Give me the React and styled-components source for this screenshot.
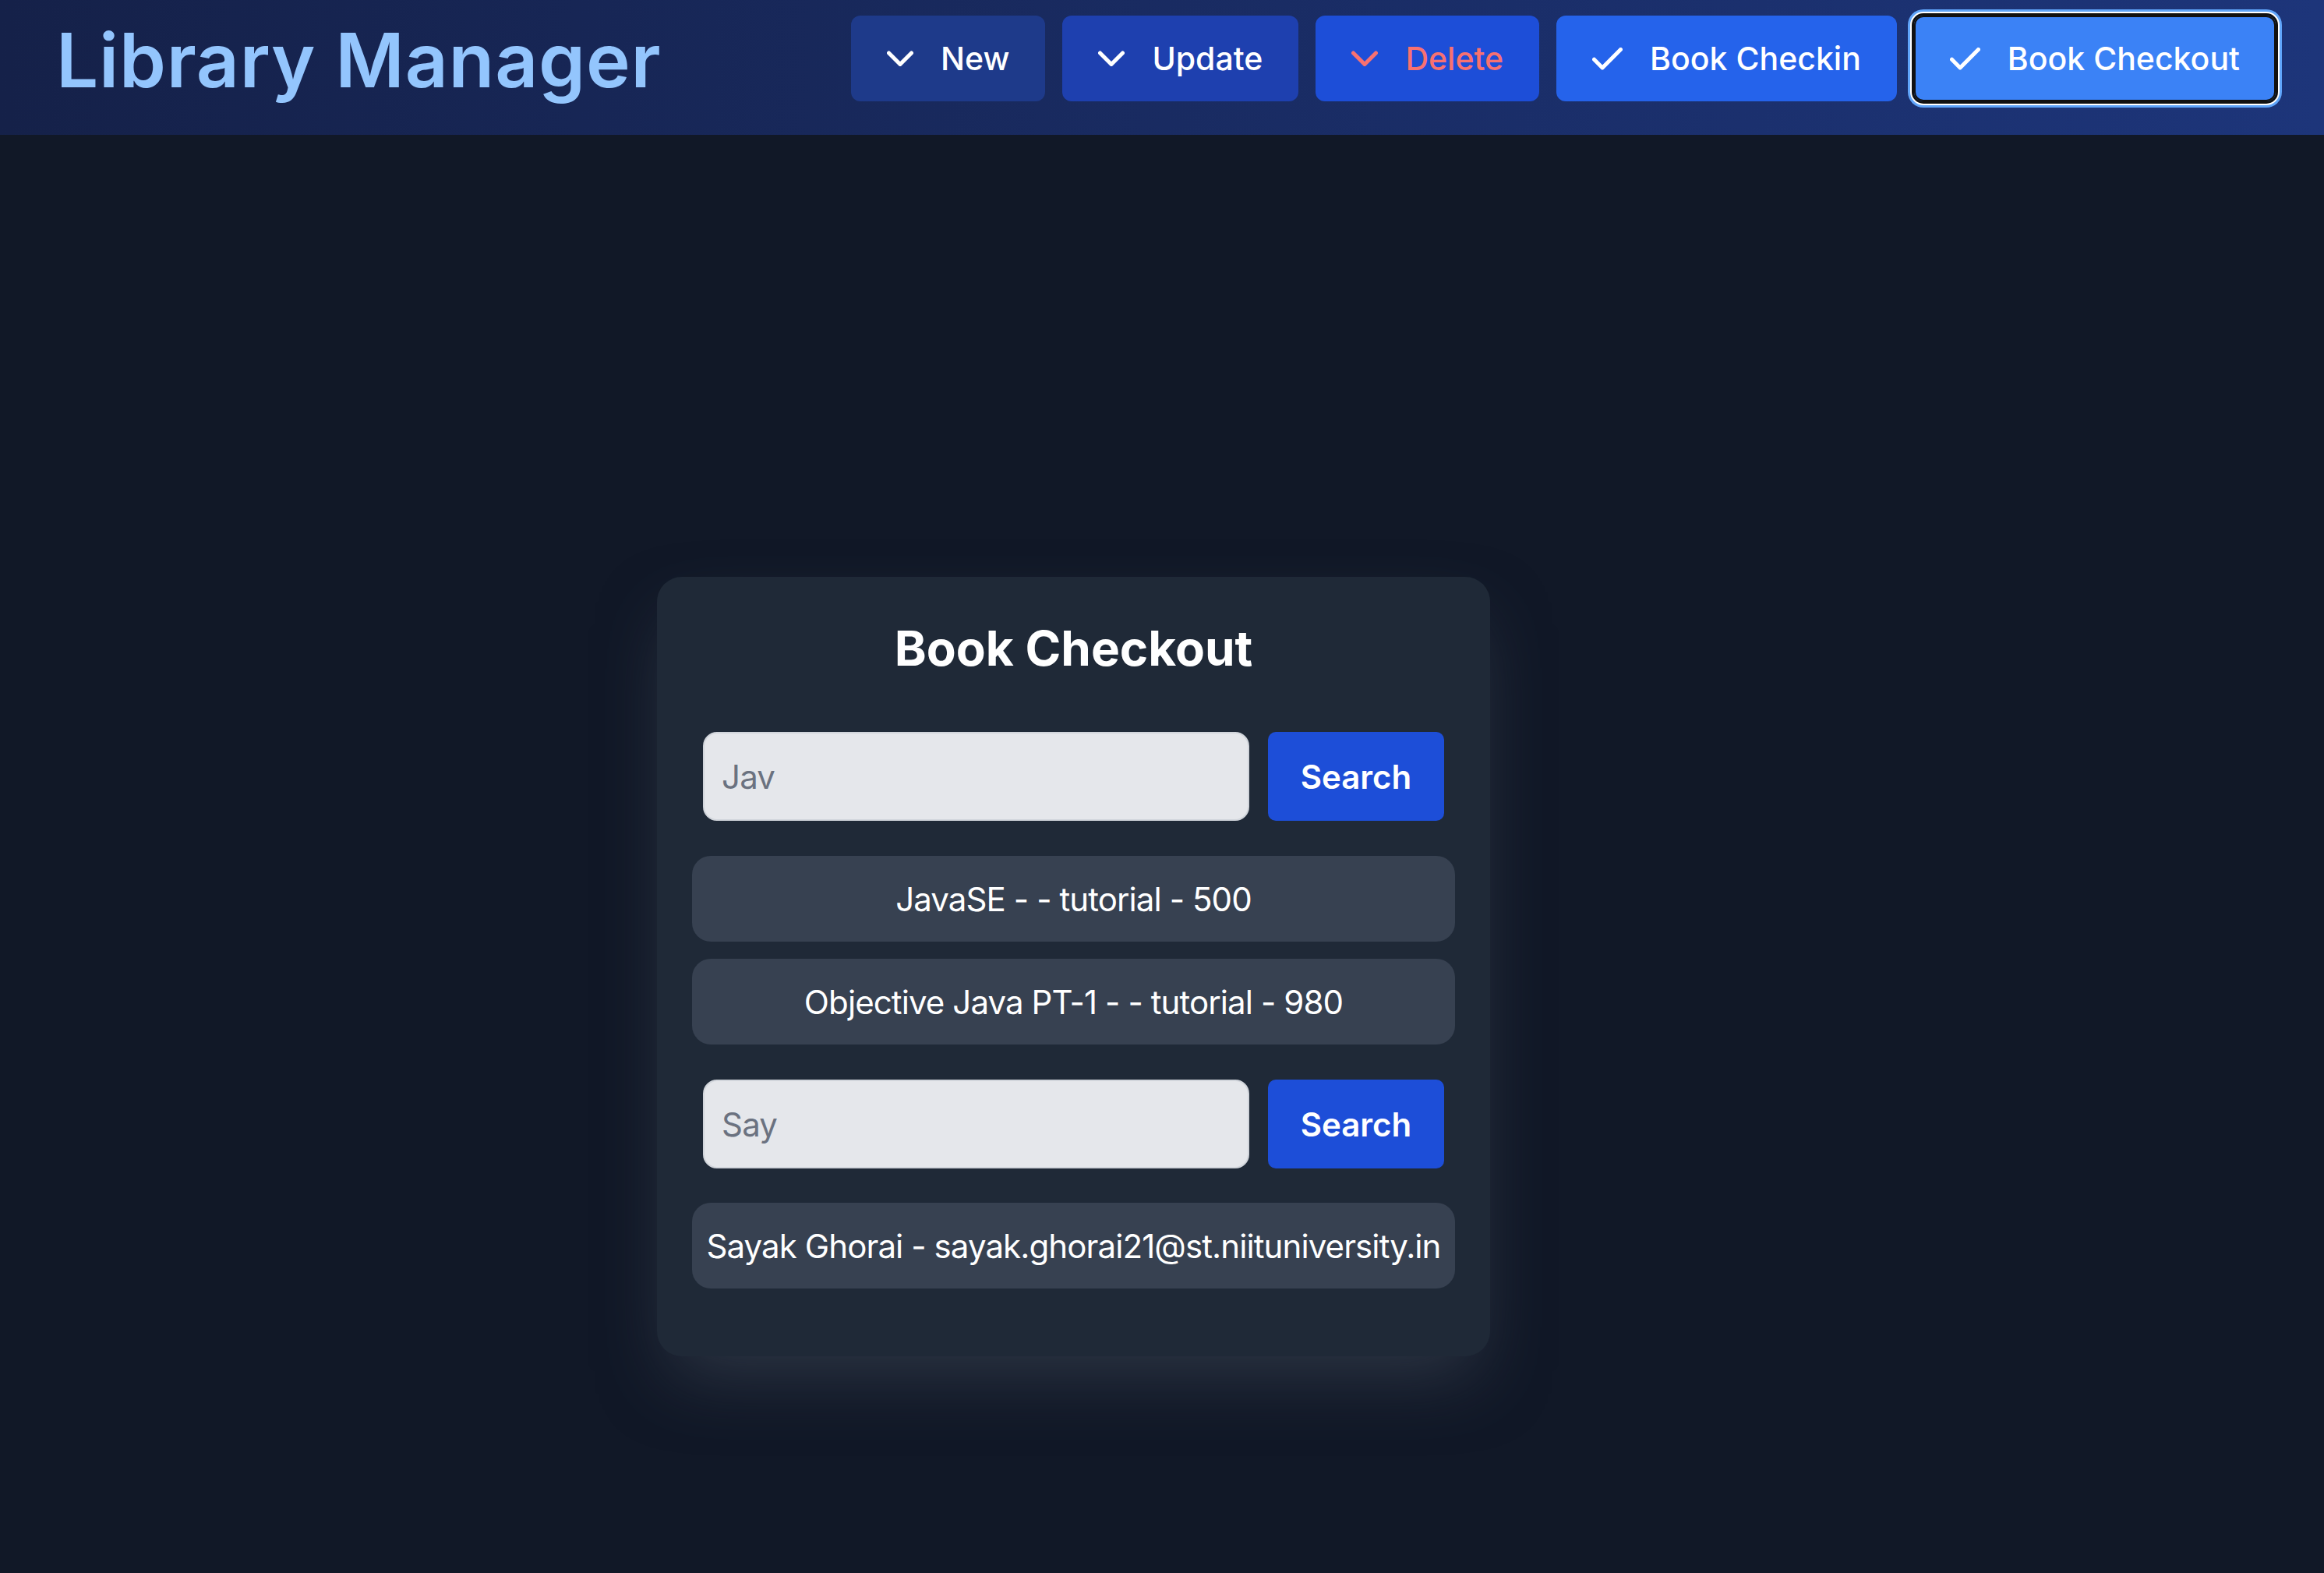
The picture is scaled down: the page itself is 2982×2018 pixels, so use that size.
import React from 'react';
import styled, { createGlobalStyle } from 'styled-components';

const GlobalStyle = createGlobalStyle`
  * { box-sizing: border-box; }
  body {
    margin: 0;
    background: #111827;
    font-family: Inter, "Noto Sans", sans-serif;
    min-height: 100vh;
  }
`;

const Page = styled.div`
  min-height: 100vh;
  background: #111827;
`;

const Header = styled.header`
  display: flex;
  align-items: center;
  justify-content: space-between;
  height: 173px;
  padding: 20px 62px 43px 72px;
  background: linear-gradient(to right, #152149, #1d357a);
`;

const Title = styled.h1`
  margin: 4px 0 0;
  font-size: 96px;
  line-height: 114px;
  font-weight: 600;
  color: #93c5fd;
  letter-spacing: 0.8px;
`;

const Nav = styled.nav`
  display: flex;
  gap: 22px;
`;

const NavButton = styled.button`
  display: flex;
  align-items: center;
  height: 110px;
  padding: 0 46px;
  border: none;
  border-radius: 12px;
  background: ${(p) => p.$bg};
  color: ${(p) => (p.$danger ? '#f87171' : '#ffffff')};
  font-family: inherit;
  font-size: 41px;
  font-weight: 500;
  cursor: pointer;
  box-shadow: ${(p) =>
    p.$active
      ? 'inset 0 0 0 2px #111, 0 0 0 3px #111, 0 0 0 5px #fff, 0 0 0 8px #60a5fa'
      : 'none'};

  svg {
    flex: none;
    margin-right: 35px;
  }
`;

const Main = styled.main`
  padding: 567px 0 200px 843px;
`;

const Card = styled.section`
  display: flex;
  flex-direction: column;
  width: 1069px;
  padding: 54px 45px 87px;
  background: #1f2937;
  border-radius: 32px;
  box-shadow: 0 40px 90px -20px rgba(75, 85, 99, 0.5);
`;

const CardTitle = styled.h2`
  margin: 0 0 70px;
  text-align: center;
  font-size: 62px;
  line-height: 75px;
  font-weight: 700;
  color: #ffffff;
`;

const SearchForm = styled.form`
  display: flex;
  gap: 24px;
  height: 114px;
  margin: ${(p) => p.$top}px 14px 0;
`;

const SearchInput = styled.input`
  flex: 1;
  min-width: 0;
  padding: 0 22px;
  border: 2px solid #d1d5db;
  border-radius: 18px;
  background: #e5e7eb;
  color: #6b7280;
  font-family: inherit;
  font-size: 42px;
  letter-spacing: -0.8px;
  outline: none;
`;

const SearchButton = styled.button`
  width: 226px;
  border: none;
  border-radius: 10px;
  background: #1d4ed8;
  color: #ffffff;
  font-family: inherit;
  font-size: 42px;
  font-weight: 600;
  cursor: pointer;
`;

const ResultRow = styled.div`
  display: flex;
  align-items: center;
  justify-content: center;
  height: 110px;
  margin-top: ${(p) => p.$top}px;
  padding: 0 20px;
  border-radius: 24px;
  background: #374151;
  color: #ffffff;
  font-size: 42px;
  letter-spacing: -0.9px;
  white-space: nowrap;
`;

const Chevron = () => (
  <svg width="34" height="20" viewBox="0 0 34 20" fill="none">
    <path d="M2.5 3 L17 17.5 L31.5 3" stroke="currentColor" strokeWidth="5" strokeLinecap="round" strokeLinejoin="round" />
  </svg>
);

const Check = () => (
  <svg width="39" height="29" viewBox="0 0 39 29" fill="none">
    <path d="M2.5 15.25 L13.1 25.9 L36.5 2.5" stroke="currentColor" strokeWidth="5" strokeLinecap="round" strokeLinejoin="round" />
  </svg>
);

const navItems = [
  { label: 'New', bg: '#1e3a8a', icon: 'chevron' },
  { label: 'Update', bg: '#1e40af', icon: 'chevron' },
  { label: 'Delete', bg: '#1d4ed8', icon: 'chevron', danger: true },
  { label: 'Book Checkin', bg: '#2563eb', icon: 'check' },
  { label: 'Book Checkout', bg: '#3b82f6', icon: 'check', active: true },
];

export default function App() {
  return (
    <Page>
      <GlobalStyle />
      <Header>
        <Title>Library Manager</Title>
        <Nav>
          {navItems.map((item) => (
            <NavButton key={item.label} $bg={item.bg} $danger={item.danger} $active={item.active}>
              {item.icon === 'check' ? <Check /> : <Chevron />}
              {item.label}
            </NavButton>
          ))}
        </Nav>
      </Header>
      <Main>
        <Card>
          <CardTitle>Book Checkout</CardTitle>
          <SearchForm $top={0} onSubmit={(e) => e.preventDefault()}>
            <SearchInput defaultValue="Jav" />
            <SearchButton type="submit">Search</SearchButton>
          </SearchForm>
          <ResultRow $top={45}>JavaSE - - tutorial - 500</ResultRow>
          <ResultRow $top={22}>Objective Java PT-1 - - tutorial - 980</ResultRow>
          <SearchForm $top={45} onSubmit={(e) => e.preventDefault()}>
            <SearchInput defaultValue="Say" />
            <SearchButton type="submit">Search</SearchButton>
          </SearchForm>
          <ResultRow $top={44}>Sayak Ghorai - sayak.ghorai21@st.niituniversity.in</ResultRow>
        </Card>
      </Main>
    </Page>
  );
}
